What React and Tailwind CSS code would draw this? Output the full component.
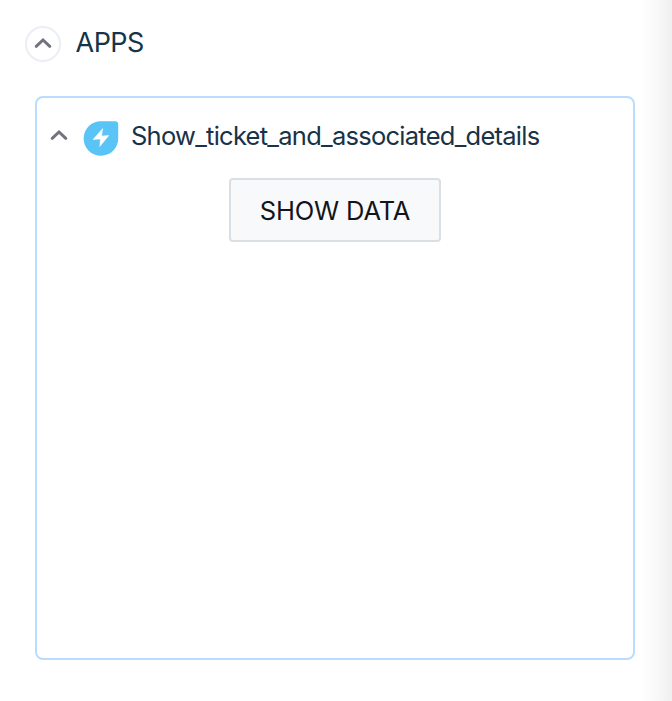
function Chevron({ className = "" }) {
  return (
    <svg className={className} width="18" height="12" viewBox="0 0 18 12" fill="none" stroke="#73727f" strokeWidth="3" strokeLinecap="round">
      <path d="M2.2 9.3 9 3l6.8 6.3" />
    </svg>
  );
}

export default function App() {
  return (
    <div className="flex h-[701px] w-[672px] overflow-hidden bg-white font-['Inter','Liberation_Sans',sans-serif]">
      <main className="flex w-[635px] shrink-0 flex-col pt-[26px]">
        <header className="flex h-9 items-center pl-[25px]">
          <div className="flex size-9 items-center justify-center rounded-full border-2 border-[#ebeff3]">
            <Chevron className="-mt-[2px]" />
          </div>
          <h1 className="-mt-[3px] ml-[14.5px] w-[80px] text-[27px] leading-8 tracking-[-0.5px] text-[#183247]"><span>APPS</span></h1>
        </header>
        <section className="ml-[35px] mt-[34px] flex h-[564px] w-[600px] flex-col rounded-lg border-2 border-[#bbdcfe] bg-white pt-[22px]">
          <div className="flex h-9 items-center pl-[13px]">
            <Chevron className="-mt-[6px]" />
            <svg className="ml-[15px]" width="36" height="36" viewBox="0 0 36 36">
              <path d="M18 1.2h14q3.2 0 3.2 3.2V18A17.3 17.3 0 1 1 18 1.2Z" fill="#5ac4f7" />
              <path d="M19.7 8.6 10 19.6l7.4-.7-.6 7.6 9-11-7.2.6Z" fill="white" stroke="white" strokeWidth=".5" strokeLinejoin="round" />
            </svg>
            <h2 className="-mt-[4px] ml-3 whitespace-nowrap text-[25.5px] leading-8 tracking-[-0.74px] text-[#183247]"><span>Show_ticket_and_associated_details</span></h2>
          </div>
          <button className="ml-[192px] mt-[22px] h-16 w-[212px] rounded border-2 border-[#dadfe3] bg-[#f8f9fb] pt-[2px] text-[25.5px] leading-8 tracking-[-0.15px] text-[#12151a]"><span>SHOW DATA</span></button>
        </section>
      </main>
      <div className="ml-auto w-[32px] bg-gradient-to-r from-white via-[#f9f9f9] to-[#efefef]" />
    </div>
  );
}
